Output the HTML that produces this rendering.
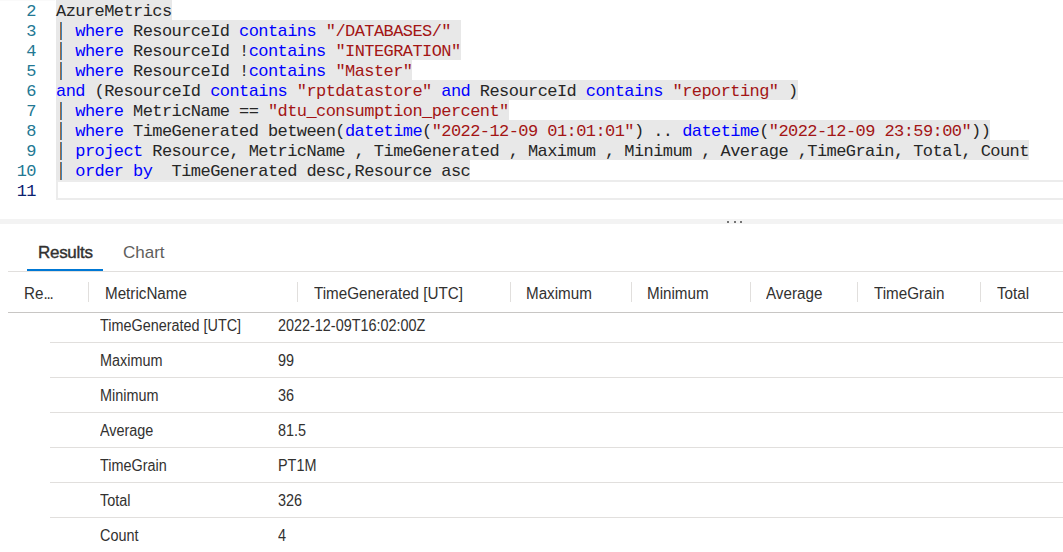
<!DOCTYPE html>
<html><head><meta charset="utf-8">
<style>
html,body{margin:0;padding:0;}
body{width:1063px;height:552px;overflow:hidden;background:#fff;position:relative;}
.ln{position:absolute;left:0;width:36px;height:20px;text-align:right;font-family:"Liberation Mono",monospace;font-size:17px;line-height:24px;letter-spacing:-0.57px;color:#237893;}
.ln.cur{color:#0b216f;}
.cl{position:absolute;left:56px;height:20px;font-family:"Liberation Mono",monospace;font-size:17px;letter-spacing:-0.57px;line-height:24px;color:#262626;white-space:pre;}
.sel{background:#e8e8e8;}
.k{color:#0000ff;}
.s{color:#a31515;}
.p{color:transparent;}
.pipe{position:absolute;left:60px;width:2px;height:18px;background:linear-gradient(90deg,#9c6a42 0,#9c6a42 50%,#3f82b8 50%,#3f82b8 100%);}
.curline{position:absolute;left:56px;top:180px;width:1007px;height:16px;border:2px solid #ececec;border-right:none;}
.splitter{position:absolute;left:0;top:219px;width:1063px;height:5px;background:#f3f3f3;}
.dot{position:absolute;top:221px;width:2px;height:2px;background:#4a4a4a;border-radius:1px;}
.sans{font-family:"Liberation Sans",sans-serif;}
.tab{position:absolute;top:240px;font-size:17px;line-height:26px;white-space:nowrap;}
.tabline{position:absolute;left:8px;top:271px;width:1055px;height:1px;background:#e1dfdd;}
.tabul{position:absolute;left:27px;top:269px;width:76px;height:2px;background:#0078d4;}
.hd{position:absolute;top:284px;height:20px;font-size:16px;transform:scaleX(0.95);transform-origin:0 0;line-height:20px;color:#323130;white-space:nowrap;}
.hsep{position:absolute;top:282px;width:1px;height:20px;background:#e1dfdd;}
.hbot{position:absolute;left:8px;top:312px;width:1055px;height:1px;background:#c8c6c4;}
.rsep{position:absolute;left:50px;width:1013px;height:1px;background:#e1dfdd;}
.rt{position:absolute;font-size:16px;transform:scaleX(0.9);transform-origin:0 0;line-height:20px;color:#323130;white-space:nowrap;}
</style></head><body>
<div style="position:absolute;left:0;top:0;width:55px;height:1px;background:#fafafa"></div>
<div class="ln" style="top:0">2</div>
<div class="ln" style="top:20px">3</div>
<div class="ln" style="top:40px">4</div>
<div class="ln" style="top:60px">5</div>
<div class="ln" style="top:80px">6</div>
<div class="ln" style="top:100px">7</div>
<div class="ln" style="top:120px">8</div>
<div class="ln" style="top:140px">9</div>
<div class="ln" style="top:160px">10</div>
<div class="ln cur" style="top:180px">11</div>

<div class="cl sel" style="top:0">AzureMetrics</div>
<div class="cl sel" style="top:20px"><span class="p">|</span> <span class="k">where</span> ResourceId <span class="k">contains</span> <span class="s">"/DATABASES/"</span> </div>
<div class="cl sel" style="top:40px"><span class="p">|</span> <span class="k">where</span> ResourceId !<span class="k">contains</span> <span class="s">"INTEGRATION"</span></div>
<div class="cl sel" style="top:60px"><span class="p">|</span> <span class="k">where</span> ResourceId !<span class="k">contains</span> <span class="s">"Master"</span></div>
<div class="cl sel" style="top:80px"><span class="k">and</span> (ResourceId <span class="k">contains</span> <span class="s">"rptdatastore"</span> <span class="k">and</span> ResourceId <span class="k">contains</span> <span class="s">"reporting"</span> )</div>
<div class="cl sel" style="top:100px"><span class="p">|</span> <span class="k">where</span> MetricName == <span class="s">"dtu_consumption_percent"</span></div>
<div class="cl sel" style="top:120px"><span class="p">|</span> <span class="k">where</span> TimeGenerated between(<span class="k">datetime</span>(<span class="s">"2022-12-09 01:01:01"</span>) .. <span class="k">datetime</span>(<span class="s">"2022-12-09 23:59:00"</span>))</div>
<div class="cl sel" style="top:140px"><span class="p">|</span> <span class="k">project</span> Resource, MetricName , TimeGenerated , Maximum , Minimum , Average ,TimeGrain, Total, Count</div>
<div class="cl sel" style="top:160px"><span class="p">|</span> <span class="k">order by</span>  TimeGenerated desc,Resource asc</div>
<div class="curline"></div>
<div class="pipe" style="top:22px"></div>
<div class="pipe" style="top:42px"></div>
<div class="pipe" style="top:62px"></div>
<div class="pipe" style="top:102px"></div>
<div class="pipe" style="top:122px"></div>
<div class="pipe" style="top:142px"></div>
<div class="pipe" style="top:162px"></div>


<div class="splitter"></div>
<div class="dot" style="left:727px"></div>
<div class="dot" style="left:734px"></div>
<div class="dot" style="left:740px"></div>

<div class="tab sans" style="left:38px;font-size:17px;letter-spacing:-0.3px;-webkit-text-stroke:0.4px #323130;color:#323130">Results</div>
<div class="tab sans" style="left:123px;color:#605e5c">Chart</div>
<div class="tabline"></div>
<div class="tabul"></div>

<div class="hd sans" style="left:24px">Re<span style="letter-spacing:-1.2px">...</span></div>
<div class="hsep" style="left:88px"></div>
<div class="hd sans" style="left:105px">MetricName</div>
<div class="hsep" style="left:297px"></div>
<div class="hd sans" style="left:314px">TimeGenerated [UTC]</div>
<div class="hsep" style="left:510px"></div>
<div class="hd sans" style="left:526px">Maximum</div>
<div class="hsep" style="left:631px"></div>
<div class="hd sans" style="left:647px">Minimum</div>
<div class="hsep" style="left:750px"></div>
<div class="hd sans" style="left:766px">Average</div>
<div class="hsep" style="left:857px"></div>
<div class="hd sans" style="left:874px">TimeGrain</div>
<div class="hsep" style="left:980px"></div>
<div class="hd sans" style="left:997px">Total</div>
<div class="hbot"></div>

<div class="rt sans" style="left:100px;top:316px">TimeGenerated [UTC]</div>
<div class="rt sans" style="left:278px;top:316px">2022-12-09T16:02:00Z</div>
<div class="rsep" style="top:342px"></div>
<div class="rt sans" style="left:100px;top:351px">Maximum</div>
<div class="rt sans" style="left:278px;top:351px">99</div>
<div class="rsep" style="top:377px"></div>
<div class="rt sans" style="left:100px;top:386px">Minimum</div>
<div class="rt sans" style="left:278px;top:386px">36</div>
<div class="rsep" style="top:412px"></div>
<div class="rt sans" style="left:100px;top:421px">Average</div>
<div class="rt sans" style="left:278px;top:421px">81.5</div>
<div class="rsep" style="top:447px"></div>
<div class="rt sans" style="left:100px;top:456px">TimeGrain</div>
<div class="rt sans" style="left:278px;top:456px">PT1M</div>
<div class="rsep" style="top:482px"></div>
<div class="rt sans" style="left:100px;top:491px">Total</div>
<div class="rt sans" style="left:278px;top:491px">326</div>
<div class="rsep" style="top:517px"></div>
<div class="rt sans" style="left:100px;top:526px">Count</div>
<div class="rt sans" style="left:278px;top:526px">4</div>
</body></html>
